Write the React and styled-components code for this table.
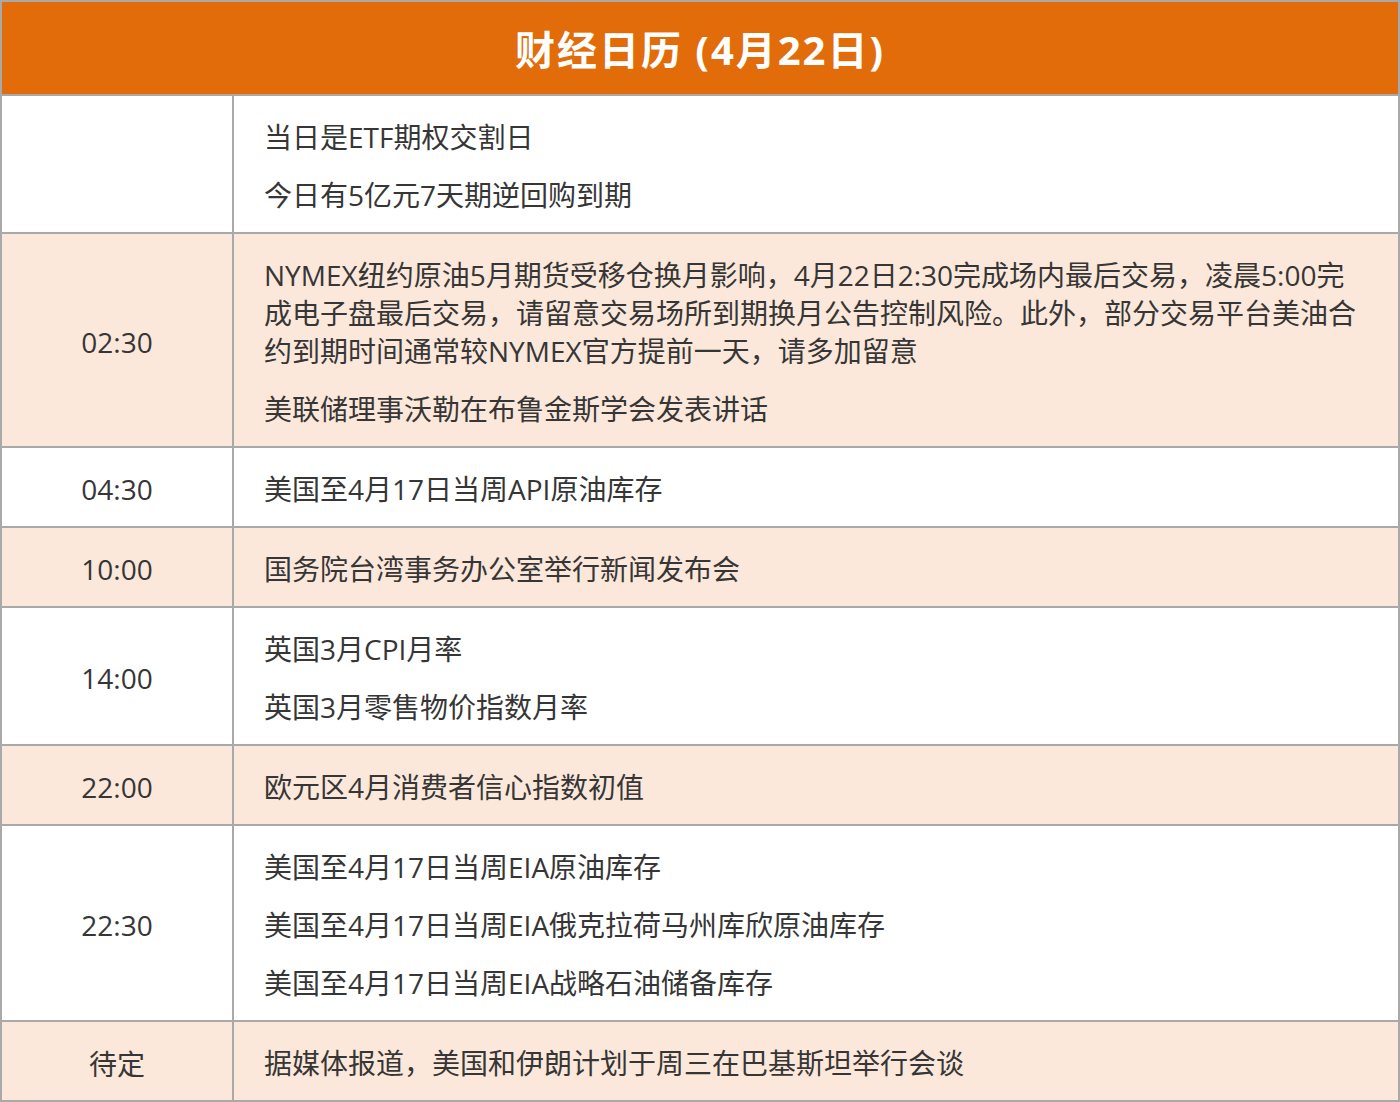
import React from "react";
import styled, { createGlobalStyle } from "styled-components";

const Global = createGlobalStyle`
  html, body { margin: 0; padding: 0; background: #ffffff; }
  body { font-family: "Open Sans", "Noto Sans CJK SC", sans-serif; }
  * { box-sizing: border-box; }
`;

const Table = styled.div`
  width: 1400px;
  border: 2px solid #a9a9a9;
  display: flex;
  flex-direction: column;
`;

const Header = styled.div`
  height: 94px;
  background: #e26b0a;
  border-bottom: 2px solid #a9a9a9;
  display: flex;
  align-items: center;
  justify-content: center;
  color: #ffffff;
  font-weight: 700;
  font-size: 40px;
  letter-spacing: 2px;
`;

const Row = styled.div`
  display: grid;
  grid-template-columns: 232px 1fr;
  background: ${(p) => (p.$alt ? "#fce8da" : "#ffffff")};
  border-bottom: ${(p) => (p.$last ? "none" : "2px solid #a9a9a9")};
`;

const TimeCell = styled.div`
  border-right: 2px solid #a9a9a9;
  display: flex;
  align-items: center;
  justify-content: center;
  padding-top: 3px;
  font-size: 28px;
  color: #363636;
`;

const EventCell = styled.div`
  padding: 22px 30px 18px 30px;
  display: flex;
  flex-direction: column;
  gap: 20px;
`;

const Item = styled.p`
  margin: 0;
  font-size: 28px;
  line-height: 38px;
  color: #363636;
`;

const rows = [
  { time: "", items: ["当日是ETF期权交割日", "今日有5亿元7天期逆回购到期"] },
  {
    time: "02:30",
    items: [
      "NYMEX纽约原油5月期货受移仓换月影响，4月22日2:30完成场内最后交易，凌晨5:00完成电子盘最后交易，请留意交易场所到期换月公告控制风险。此外，部分交易平台美油合约到期时间通常较NYMEX官方提前一天，请多加留意",
      "美联储理事沃勒在布鲁金斯学会发表讲话",
    ],
  },
  { time: "04:30", items: ["美国至4月17日当周API原油库存"] },
  { time: "10:00", items: ["国务院台湾事务办公室举行新闻发布会"] },
  { time: "14:00", items: ["英国3月CPI月率", "英国3月零售物价指数月率"] },
  { time: "22:00", items: ["欧元区4月消费者信心指数初值"] },
  {
    time: "22:30",
    items: [
      "美国至4月17日当周EIA原油库存",
      "美国至4月17日当周EIA俄克拉荷马州库欣原油库存",
      "美国至4月17日当周EIA战略石油储备库存",
    ],
  },
  { time: "待定", items: ["据媒体报道，美国和伊朗计划于周三在巴基斯坦举行会谈"] },
];

export default function App() {
  return (
    <>
      <Global />
      <Table>
        <Header>财经日历 (4月22日)</Header>
        {rows.map((r, i) => (
          <Row key={i} $alt={i % 2 === 1} $last={i === rows.length - 1}>
            <TimeCell>{r.time}</TimeCell>
            <EventCell>
              {r.items.map((t, j) => (
                <Item key={j}>{t}</Item>
              ))}
            </EventCell>
          </Row>
        ))}
      </Table>
    </>
  );
}
